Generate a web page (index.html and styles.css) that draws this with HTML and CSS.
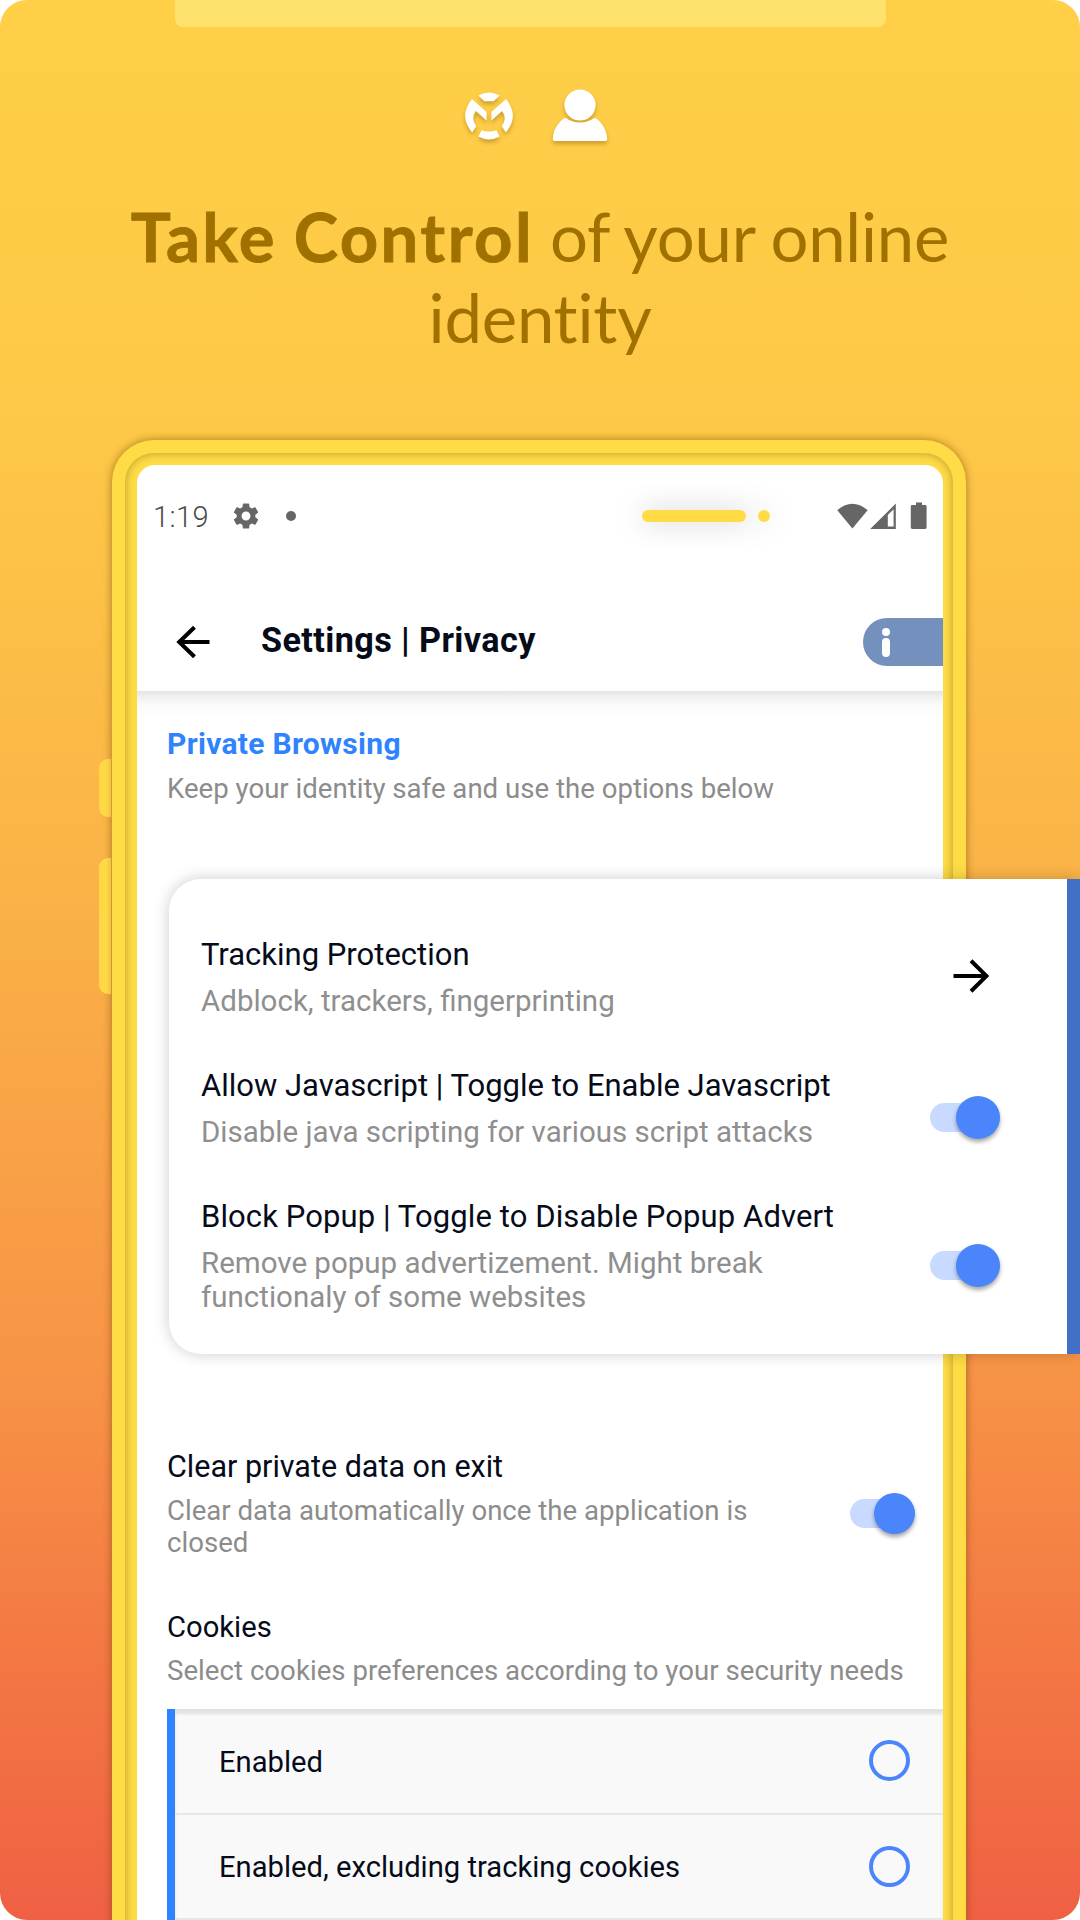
FILE: index.html
```html
<!DOCTYPE html>
<html lang="en">
<head>
<meta charset="utf-8">
<title>Take Control of your online identity</title>
<link rel="stylesheet" href="styles.css">
</head>
<body>
<main class="poster">
  <header class="hero">
    <div class="tab"></div>
    <div class="marks">
      <svg class="mark-logo" viewBox="0 0 48 48" width="48" height="48">
        <g fill="#fff">
          <path d="M13.3 3.400Q24-2.400 34.700 3.400L28.600 9.200H19.400Z"/>
          <path d="M13.300 44.600Q24 50.400 34.700 44.600L31.400 38.300Q24 40.700 16.600 38.300Z"/>
          <path d="M7 7.100L21.600 20V28.500L10.800 19Q5.500 27 11.300 34.300L7.100 40.500Q-6.800 24 7 7.100Z"/>
          <path d="M41 7.100L26.400 20V28.500L37.200 19Q42.500 27 36.700 34.300L40.900 40.500Q54.800 24 41 7.100Z"/>
        </g>
      </svg>
      <svg class="mark-user" viewBox="0 0 56 53" width="56" height="53">
        <g fill="#fff">
          <circle cx="28" cy="16" r="15.600"/>
          <path d="M13.400 28.700Q19.500 33.400 28 33.400T42.600 28.700C49.500 32.300 55 41 55.200 50.200Q55.200 52 53.600 52H2.400Q.8 52 .8 50.200C1 41 6.500 32.300 13.400 28.700Z"/>
        </g>
      </svg>
    </div>
    <h1 class="headline"><b>Take Control</b> of your online<br>identity</h1>
  </header>

  <section class="phone">
    <i class="side-key key-short"></i>
    <i class="side-key key-long"></i>
    <div class="bezel">
      <div class="screen">
        <div class="status">
          <span class="clock">1:19</span>
          <svg class="gear" viewBox="2 2 20 20" width="26" height="26"><path fill="#666" d="M19.14 12.94c.04-.3.06-.61.06-.94s-.02-.64-.07-.94l2.03-1.58c.18-.14.23-.41.12-.61l-1.92-3.32c-.12-.22-.37-.29-.59-.22l-2.39.96c-.5-.38-1.03-.7-1.62-.94l-.36-2.54c-.04-.24-.24-.41-.48-.41h-3.84c-.24 0-.43.17-.47.41l-.36 2.54c-.59.24-1.13.57-1.62.94l-2.39-.96c-.22-.08-.47 0-.59.22L2.740 8.870c-.12.21-.08.47.12.61l2.030 1.580c-.05.3-.09.63-.09.94s.02.64.07.94l-2.030 1.580c-.18.14-.23.41-.12.61l1.920 3.320c.12.22.37.29.59.22l2.390-.96c.5.38 1.030.7 1.620.94l.36 2.540c.05.24.24.41.48.41h3.840c.24 0 .44-.17.47-.41l.36-2.540c.59-.24 1.130-.56 1.620-.94l2.390.96c.22.08.47 0 .59-.22l1.920-3.320c.12-.22.07-.47-.12-.61l-2.010-1.580zM12 15.400A3.400 3.400 0 1 1 12 8.600a3.400 3.400 0 0 1 0 6.800z"/></svg>
          <i class="dot"></i>
          <span class="speaker"><i class="slot"></i><i class="lens"></i></span>
          <svg class="signals" viewBox="0 0 91 28" width="91" height="28">
            <g fill="#666">
              <path d="M.3 8.200Q15.400-4.800 30.600 8.200L15.400 26.600Z"/>
              <path fill-rule="evenodd" d="M58.800 1.600V27H33.200ZM50.800 12.900V24.600H56.600V7.200Z"/>
              <path d="M79 .6h6v2.300h3.200q1.400 0 1.400 1.400v21.200q0 1.400-1.400 1.400H75.200q-1.400 0-1.400-1.400V4.300q0-1.400 1.400-1.400H79Z"/>
            </g>
          </svg>
        </div>

        <div class="appbar">
          <svg class="back" viewBox="0 0 34 34" width="34" height="34"><path d="M33.500 17H3M18.500 2.200L3.200 17l15.300 14.800" fill="none" stroke="#000" stroke-width="4"/></svg>
          <h2 class="appbar-title">Settings | Privacy</h2>
          <span class="info"><svg viewBox="0 0 8 29" width="8" height="29"><circle cx="4" cy="4" r="4" fill="#fff"/><rect y="10" width="8" height="19" rx="4" fill="#fff"/></svg></span>
        </div>

        <div class="intro">
          <h3 class="section-title">Private Browsing</h3>
          <p class="note">Keep your identity safe and use the options below</p>
        </div>

        <div class="card">
          <div class="card-body">
            <div class="row">
              <div>
                <div class="name">Tracking Protection</div>
                <div class="desc">Adblock, trackers, fingerprinting</div>
              </div>
              <svg class="go" viewBox="0 0 36 34" width="36" height="34"><path d="M.5 17H33M18 1.800L33.500 17 18 32.200" fill="none" stroke="#000" stroke-width="4"/></svg>
            </div>
            <div class="row">
              <div>
                <div class="name">Allow Javascript | Toggle to Enable Javascript</div>
                <div class="desc">Disable java scripting for various script attacks</div>
              </div>
              <span class="toggle"><i class="thumb"></i></span>
            </div>
            <div class="row">
              <div>
                <div class="name name-popup">Block Popup | Toggle to Disable Popup Advert</div>
                <div class="desc">Remove popup advertizement. Might break<br>functionaly of some websites</div>
              </div>
              <span class="toggle"><i class="thumb"></i></span>
            </div>
          </div>
        </div>

        <div class="plain">
          <div class="row">
            <div>
              <div class="label">Clear private data on exit</div>
              <div class="note">Clear data automatically once the application is<br>closed</div>
            </div>
            <span class="toggle toggle-small"><i class="thumb"></i></span>
          </div>
          <div>
            <div class="label label-cookies">Cookies</div>
            <div class="note note-cookies">Select cookies preferences according to your security needs</div>
          </div>
        </div>

        <div class="choices">
          <div class="choice">Enabled<i class="radio"></i></div>
          <div class="choice">Enabled, excluding tracking cookies<i class="radio"></i></div>
        </div>
      </div>
    </div>
  </section>
</main>
</body>
</html>
```

FILE: styles.css
```css
* { box-sizing: border-box; }

body {
  margin: 0;
  background: #fff;
  font-family: Roboto, "Liberation Sans", sans-serif;
  color: #060b1a;
}

h1, h2, h3, p { margin: 0; }
i { display: block; font-style: normal; }
svg { display: block; flex: none; }

.poster {
  width: 1080px;
  height: 1920px;
  overflow: hidden;
  border-radius: 27px;
  background: linear-gradient(#ffcf47 0%, #fdc847 22%, #fbb547 44%, #f79346 72%, #f37643 87%, #f06044 100%);
}

/* Hero */
.hero {
  height: 440px;
  display: flex;
  flex-direction: column;
  align-items: center;
}

.tab {
  width: 711px;
  height: 27px;
  margin-right: 19px;
  border-radius: 0 0 8px 8px;
  background: #ffe26d;
}

.marks {
  display: flex;
  gap: 39px;
  height: 53px;
  margin: 62px 7px 0 0;
  align-items: center;
  filter: drop-shadow(0 3px 2px rgba(130, 90, 0, .4));
}

.mark-logo { margin-top: 1px; }

.headline {
  margin-top: 54px;
  font: 400 67px/81px Lato, "Open Sans", sans-serif;
  letter-spacing: -.2px;
  word-spacing: -1px;
  text-align: center;
  color: #a17100;
}

.headline b {
  font-weight: 700;
  letter-spacing: 2.4px;
  word-spacing: -2px;
  -webkit-text-stroke: .8px #a17100;
}

/* Phone */
.phone {
  position: relative;
  width: 854px;
  height: 1500px;
  margin-left: 112px;
  padding: 13px 13px 0;
  border-radius: 42px 42px 0 0;
  background: #ffdb46;
  box-shadow: 0 0 8px rgba(110, 70, 0, .6);
}

.side-key {
  position: absolute;
  left: -13px;
  width: 12px;
  border-radius: 9px 0 0 9px;
  background: linear-gradient(90deg, #ffd945 60%, #edc540);
}

.key-short { top: 319px; height: 58px; }
.key-long { top: 418px; height: 136px; }

.bezel {
  height: 100%;
  padding: 12px 10px 0 12px;
  border-radius: 29px 29px 0 0;
  box-shadow: inset 0 0 9px rgba(120, 100, 20, .55);
}

.screen {
  width: 806px;
  height: 100%;
  border-radius: 18px 18px 0 0;
  background: #fff;
}

.status {
  display: flex;
  align-items: center;
  height: 101px;
  padding: 0 15px 0 16px;
}

.clock {
  margin-top: 3px;
  font-size: 29px;
  font-weight: 300;
  letter-spacing: .4px;
  color: #4c4c4c;
}

.gear { margin-left: 24px; }

.dot {
  width: 10px;
  height: 10px;
  margin-left: 27px;
  border-radius: 50%;
  background: #666;
}

.speaker {
  display: flex;
  align-items: center;
  gap: 12px;
  margin-left: 346px;
  filter: drop-shadow(0 0 14px rgba(0, 0, 0, .2));
}

.slot { width: 104px; height: 12px; border-radius: 6px; background: #ffdb46; }
.lens { width: 12px; height: 12px; border-radius: 6px; background: #ffdb46; }
.signals { margin-left: auto; }

.appbar {
  display: flex;
  align-items: center;
  height: 125px;
  padding: 26px 0 0 39px;
}

.appbar-title {
  margin: -3px 0 0 51px;
  font-size: 34.2px;
  line-height: 40px;
  font-weight: 700;
  letter-spacing: .4px;
}

.info {
  display: flex;
  width: 80px;
  height: 48px;
  margin-left: auto;
  padding: 10px 0 0 19px;
  border-radius: 24px 0 0 24px;
  background: #7490bd;
}

.intro {
  height: 188px;
  padding: 35px 0 0 30px;
  background: linear-gradient(#e4e4e4, #f1f1f1 6px, #fafafa 14px, #fff 26px);
}

.section-title {
  margin-bottom: 10px;
  font-size: 30px;
  line-height: 36px;
  font-weight: 700;
  letter-spacing: .3px;
  color: #2f83ff;
}

.note {
  font-size: 27.6px;
  line-height: 32px;
  color: #8c8c8c;
}

.intro .note { line-height: 34px; }
.note-cookies { letter-spacing: .03px; }

/* Raised card that runs past the phone to the poster's edge */
.card {
  position: relative;
  width: 911px;
  height: 475px;
  margin-left: 32px;
  border-right: 13px solid #4170c6;
  border-radius: 32px 0 0 32px;
  background: #fff;
  box-shadow: 0 0 16px rgba(0, 0, 0, .2);
}

.card-body {
  display: flex;
  flex-direction: column;
  gap: 50px;
  padding: 58px 67px 0 32px;
}

.row {
  display: flex;
  align-items: center;
  justify-content: space-between;
}

.name {
  margin-bottom: 11px;
  font-size: 31px;
  line-height: 36px;
}

.name-popup { letter-spacing: .1px; }

.desc {
  font-size: 29.5px;
  line-height: 34px;
  color: #8f8f8f;
}

.go { margin: -3px 11px 0 0; }

.toggle {
  display: flex;
  justify-content: flex-end;
  align-items: center;
  width: 70px;
  height: 29px;
  margin-top: 18px;
  border-radius: 15px;
  background: #c8daff;
}

.thumb {
  flex: none;
  width: 44px;
  height: 43px;
  border-radius: 50%;
  background: #4a85fb;
  box-shadow: 0 3px 4px rgba(0, 0, 0, .35);
}

.toggle-small { width: 65px; }
.toggle-small .thumb { width: 41px; height: 41px; }

.plain {
  display: flex;
  flex-direction: column;
  gap: 50px;
  padding: 95px 28px 22px 30px;
}

.label {
  margin-bottom: 10px;
  font-size: 30.5px;
  line-height: 36px;
}

.label-cookies { font-size: 29.2px; }

.choices {
  margin-left: 30px;
  border-left: 8px solid #2f83ff;
  background: #f9f9f9;
  box-shadow: inset 0 5px 3px #e1e1e1;
}

.choice {
  display: flex;
  align-items: center;
  justify-content: space-between;
  height: 106px;
  padding: 1px 33px 0 44px;
  border-bottom: 2px solid #e6e6e6;
  font-size: 29.2px;
}

.choice + .choice { height: 105px; }

.radio {
  width: 41px;
  height: 41px;
  margin-top: -2px;
  border: 4px solid #4a85fb;
  border-radius: 50%;
}
```
